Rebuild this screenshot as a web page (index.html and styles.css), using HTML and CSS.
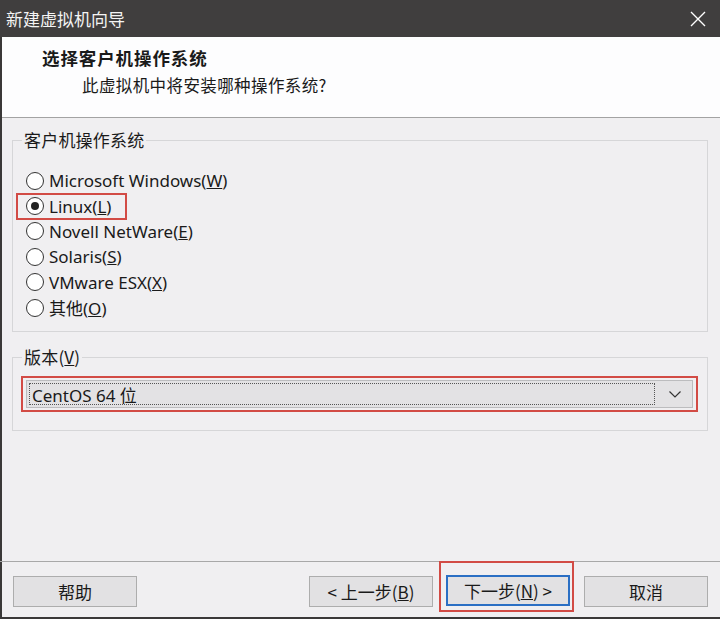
FILE: index.html
```html
<!DOCTYPE html>
<html lang="zh-CN">
<head>
<meta charset="utf-8">
<title>新建虚拟机向导</title>
<link rel="stylesheet" href="styles.css">
</head>
<body>
<div class="window">
  <div class="titlebar">
    <span class="title">新建虚拟机向导</span>
    <svg class="close" width="16" height="16" viewBox="0 0 16 16"><path d="M1 1 L15 15 M15 1 L1 15" stroke="#ffffff" stroke-width="1.4" fill="none"/></svg>
  </div>
  <div class="header">
    <div class="h-title">选择客户机操作系统</div>
    <div class="h-sub">此虚拟机中将安装哪种操作系统?</div>
  </div>
  <div class="body">
    <fieldset class="group group-os">
      <legend>客户机操作系统</legend>
      <div class="radios">
        <div class="radio"><span class="circle"></span><span>Microsoft Windows(<u>W</u>)</span></div>
        <div class="radio checked marked"><span class="circle"></span><span>Linux(<u>L</u>)</span></div>
        <div class="radio"><span class="circle"></span><span>Novell NetWare(<u>E</u>)</span></div>
        <div class="radio"><span class="circle"></span><span>Solaris(<u>S</u>)</span></div>
        <div class="radio"><span class="circle"></span><span>VMware ESX(<u>X</u>)</span></div>
        <div class="radio"><span class="circle"></span><span>其他(<u>O</u>)</span></div>
      </div>
    </fieldset>
    <fieldset class="group group-ver">
      <legend>版本(<u>V</u>)</legend>
      <div class="select-mark">
        <div class="select">
          <div class="select-value"><span>CentOS 64 位</span></div>
          <svg class="chevron" width="12" height="7" viewBox="0 0 12 7"><path d="M0.5 0.5 L6 6 L11.5 0.5" stroke="#333" stroke-width="1.2" fill="none"/></svg>
        </div>
      </div>
    </fieldset>
  </div>
  <div class="footer">
    <button class="btn">帮助</button>
    <div class="spacer"></div>
    <button class="btn">&lt; 上一步(<u>B</u>)</button>
    <div class="next-mark"><button class="btn default">下一步(<u>N</u>) &gt;</button></div>
    <button class="btn">取消</button>
  </div>
</div>
</body>
</html>
```
FILE: styles.css
```css
html, body {
  margin: 0;
  padding: 0;
}
body {
  width: 720px;
  height: 619px;
  overflow: hidden;
  background: #f0eff1;
  font-family: "Noto Sans", "Noto Sans CJK SC", sans-serif;
  font-size: 16px;
  color: #1a1a1a;
}
.window {
  width: 720px;
  height: 619px;
  box-sizing: border-box;
  border-left: 2px solid #3a3838;
  border-bottom: 2px solid #3a3838;
  display: flex;
  flex-direction: column;
}
.titlebar {
  height: 37px;
  margin-left: -2px;
  background: #403e3e;
  display: flex;
  align-items: center;
  justify-content: space-between;
  padding: 0 14px 0 6px;
  flex-shrink: 0;
}
.title {
  color: #f4f4f4;
  font-family: "Noto Sans CJK SC", sans-serif;
  font-size: 17px;
  line-height: 20px;
}
.close {
  display: block;
}
.header {
  height: 80px;
  background: #fdfdfe;
  border-bottom: 1px solid #a3a3a3;
  flex-shrink: 0;
  box-sizing: content-box;
  padding-left: 40px;
}
.h-title {
  font-family: "Noto Sans CJK SC", sans-serif;
  font-weight: bold;
  font-size: 17.5px;
  line-height: 22px;
  margin-top: 10px;
  letter-spacing: 0.9px;
}
.h-sub {
  font-family: "Noto Sans CJK SC", sans-serif;
  font-size: 16.5px;
  line-height: 22px;
  margin-top: 5px;
  padding-left: 40px;
  letter-spacing: 0.4px;
}
.body {
  flex: 1;
  padding: 0 12px 0 10px;
}
.group {
  margin: 0;
  padding: 0;
  border: 1px solid #d6d6d8;
  box-sizing: border-box;
}
.group legend {
  padding: 0 2px;
  margin-left: 9px;
  font-family: "Noto Sans CJK SC", sans-serif;
  font-size: 17px;
  line-height: 22px;
  letter-spacing: 0.2px;
}
.group-os {
  margin-top: 11px;
  height: 203px;
}
.radios {
  padding: 17px 0 0 13px;
}
.radio {
  height: 25.4px;
  display: flex;
  align-items: center;
  gap: 5px;
  position: relative;
  font-size: 17px;
}
.circle {
  width: 16px;
  height: 16px;
  border: 1.4px solid #333;
  border-radius: 50%;
  background: #fff;
  position: relative;
  flex-shrink: 0;
}
.radio.checked .circle::after {
  content: "";
  position: absolute;
  left: 4px;
  top: 4px;
  width: 8px;
  height: 8px;
  border-radius: 50%;
  background: #222;
}
.radio.marked::before {
  content: "";
  position: absolute;
  left: -10px;
  top: 0px;
  width: 107px;
  height: 23px;
  border: 2px solid #d24b45;
}
.group-ver {
  margin-top: 14px;
  height: 85px;
}
.select-mark {
  margin: 8px 9px 0 8px;
  border: 2px solid #d24b45;
  padding: 2px 3px;
}
.select {
  height: 28px;
  box-sizing: border-box;
  background: #e3e2e4;
  border: 1px solid #bcbcbe;
  display: flex;
  align-items: center;
  padding: 2px;
}
.select-value {
  flex: 1;
  align-self: stretch;
  border: 1px dotted #555;
  display: flex;
  align-items: center;
  padding-left: 2px;
  font-size: 17px;
}
.chevron {
  margin: 0 9px 0 14px;
}
.footer {
  height: 56px;
  flex-shrink: 0;
  border-top: 1px solid #a8a8a8;
  margin-left: -2px;
  display: flex;
  align-items: flex-start;
  padding: 14px 12px 0 13px;
  box-sizing: border-box;
}
.spacer {
  flex: 1;
}
.btn {
  width: 124px;
  height: 31px;
  background: #e2e1e3;
  border: 1px solid #adadad;
  font-family: "Noto Sans CJK SC", sans-serif;
  font-size: 17px;
  color: #1a1a1a;
  padding: 0;
  margin: 0;
}
.next-mark {
  margin: -15px 10px 0 6px;
  border: 2px solid #d24b45;
  padding: 12px 2px 4px 5px;
}
.btn.default {
  border: 2px solid #2b6fc4;
  display: block;
}
```
